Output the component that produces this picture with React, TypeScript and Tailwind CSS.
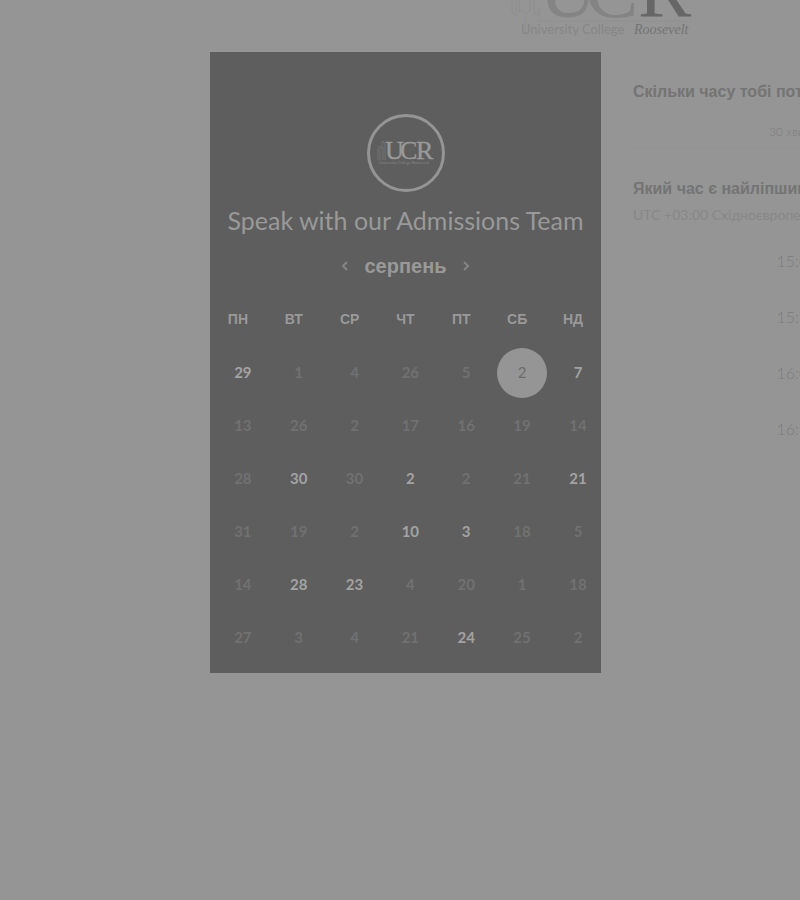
import React from "react";

type Day = { n: number; open?: boolean; selected?: boolean };

const weekdays = ["ПН", "ВТ", "СР", "ЧТ", "ПТ", "СБ", "НД"];

const off = (n: number): Day => ({ n });
const on = (n: number): Day => ({ n, open: true });

const weeks: Day[][] = [
  [on(29), off(1), off(4), off(26), off(5), { n: 2, selected: true }, on(7)],
  [off(13), off(26), off(2), off(17), off(16), off(19), off(14)],
  [off(28), on(30), off(30), on(2), off(2), off(21), on(21)],
  [off(31), off(19), off(2), on(10), on(3), off(18), off(5)],
  [off(14), on(28), on(23), off(4), off(20), off(1), off(18)],
  [off(27), off(3), off(4), off(21), on(24), off(25), off(2)],
];

const times = ["15:00", "15:30", "16:00", "16:30"];

function HeaderLogo() {
  return (
    <svg width="184" height="52" viewBox="0 0 184 52" role="img" aria-label="University College Roosevelt">
      <g fill="none" stroke="#8d8d8d" strokeWidth="1">
        <path d="M2 0V12l3 3 2-2M9 0V12l3-2 4 4 4-4V0M6 0V12M24 0V13l5 2V8" />
        <path d="M29 8V21H182M15 15V35" stroke="#909090" />
      </g>
      <g fontFamily="'Liberation Serif', serif" fontSize="80">
        <text x="29" y="17" fill="#848484">U</text>
        <text x="75" y="17" fill="#848484">C</text>
        <text x="128" y="17" fill="#666666">R</text>
      </g>
      <text x="11" y="34" fontFamily="Lato, sans-serif" fontSize="13" fill="#868686">
        University College
      </text>
      <text x="124" y="34" fontFamily="'Liberation Serif', serif" fontSize="14" fontStyle="italic" fill="#747474">
        Roosevelt
      </text>
    </svg>
  );
}

function BadgeLogo() {
  return (
    <svg width="60" height="32" viewBox="0 0 60 32" role="img" aria-label="UCR">
      <path d="M2 23V12l2-3 2 3V7l1-3 2 4v15M4 12v11M7 10v13" fill="none" stroke="#727272" strokeWidth="1" />
      <g fontFamily="'Liberation Serif', serif" fontSize="26" fill="#999999" stroke="#999999" strokeWidth="0.4">
        <text x="9" y="22">U</text>
        <text x="24" y="22">C</text>
        <text x="40" y="22">R</text>
      </g>
      <text x="3" y="27" fontFamily="Lato, sans-serif" fontSize="4" fill="#858585">
        University College Roosevelt
      </text>
    </svg>
  );
}

function DayButton({ day }: { day: Day }) {
  const look = day.selected
    ? "bg-[#959595] text-[#6c6c6c] font-normal"
    : day.open
      ? "text-[#a3a3a3] font-bold"
      : "text-[#717171] font-bold";
  return (
    <button type="button" className={`size-[50px] shrink-0 rounded-full text-[15px] ${look}`}>
      {day.n}
    </button>
  );
}

function Calendar() {
  return (
    <section className="flex w-[391px] shrink-0 flex-col items-center bg-[#5e5e5e] pt-[62px] pb-[9px] text-[#999999]">
      <div className="flex size-[78px] items-center justify-center rounded-full border-3 border-[#959595]">
        <BadgeLogo />
      </div>
      <h1 className="mt-2 text-[25px] leading-10 whitespace-nowrap">Speak with our Admissions Team</h1>
      <div className="mt-1.5 flex items-center gap-4 font-['Liberation_Sans',sans-serif]">
        <button type="button" aria-label="Попередній місяць">
          <svg width="8" height="12" viewBox="0 0 8 12" fill="none" stroke="#858585" strokeWidth="2">
            <path d="M7 2 3 6l4 4" />
          </svg>
        </button>
        <h2 className="text-xl leading-10 font-bold">серпень</h2>
        <button type="button" aria-label="Наступний місяць">
          <svg width="8" height="12" viewBox="0 0 8 12" fill="none" stroke="#858585" strokeWidth="2">
            <path d="m1 2 4 4-4 4" />
          </svg>
        </button>
      </div>
      <table className="mt-1.5 w-full table-fixed border-collapse">
        <thead>
          <tr className="h-[54px] font-['Liberation_Sans',sans-serif] text-sm">
            {weekdays.map((d) => (
              <th key={d} className="p-0 font-bold">{d}</th>
            ))}
          </tr>
        </thead>
        <tbody>
          {weeks.map((week, i) => (
            <tr key={i} className="h-[53px]">
              {week.map((day, j) => (
                <td key={j} className="p-0 text-center align-middle">
                  <div className="-mr-0.5 flex justify-end">
                    <DayButton day={day} />
                  </div>
                </td>
              ))}
            </tr>
          ))}
        </tbody>
      </table>
    </section>
  );
}

function Slots() {
  return (
    <section className="ml-8 w-[328px] shrink-0 pt-7 text-[#7b7b7b]">
      <h2 className="font-['Liberation_Sans',sans-serif] text-base leading-6 font-bold whitespace-nowrap text-[#747474]">
        Скільки часу тобі потрібно?
      </h2>
      <div className="mt-4 border-b border-[#929292] pb-1 text-center">
        <button type="button" className="block w-full text-xs leading-6 font-light">30 хвилин</button>
      </div>
      <h2 className="mt-7 font-['Liberation_Sans',sans-serif] text-base leading-6 font-bold whitespace-nowrap text-[#747474]">
        Який час є найліпшим?
      </h2>
      <p className="text-sm leading-7 whitespace-nowrap text-[#878787]">UTC +03:00 Східноєвропейський час</p>
      <ul className="mt-1">
        {times.map((t) => (
          <li key={t} className="flex h-14 items-center justify-center">
            <button type="button" className="text-base font-light">{t}</button>
          </li>
        ))}
      </ul>
    </section>
  );
}

export default function App() {
  return (
    <div className="min-h-screen overflow-hidden bg-[#959595] font-[Lato,'Noto_Sans',sans-serif]">
      <header className="flex pl-[510px]">
        <HeaderLogo />
      </header>
      <main className="flex items-start pl-[210px]">
        <Calendar />
        <Slots />
      </main>
    </div>
  );
}
